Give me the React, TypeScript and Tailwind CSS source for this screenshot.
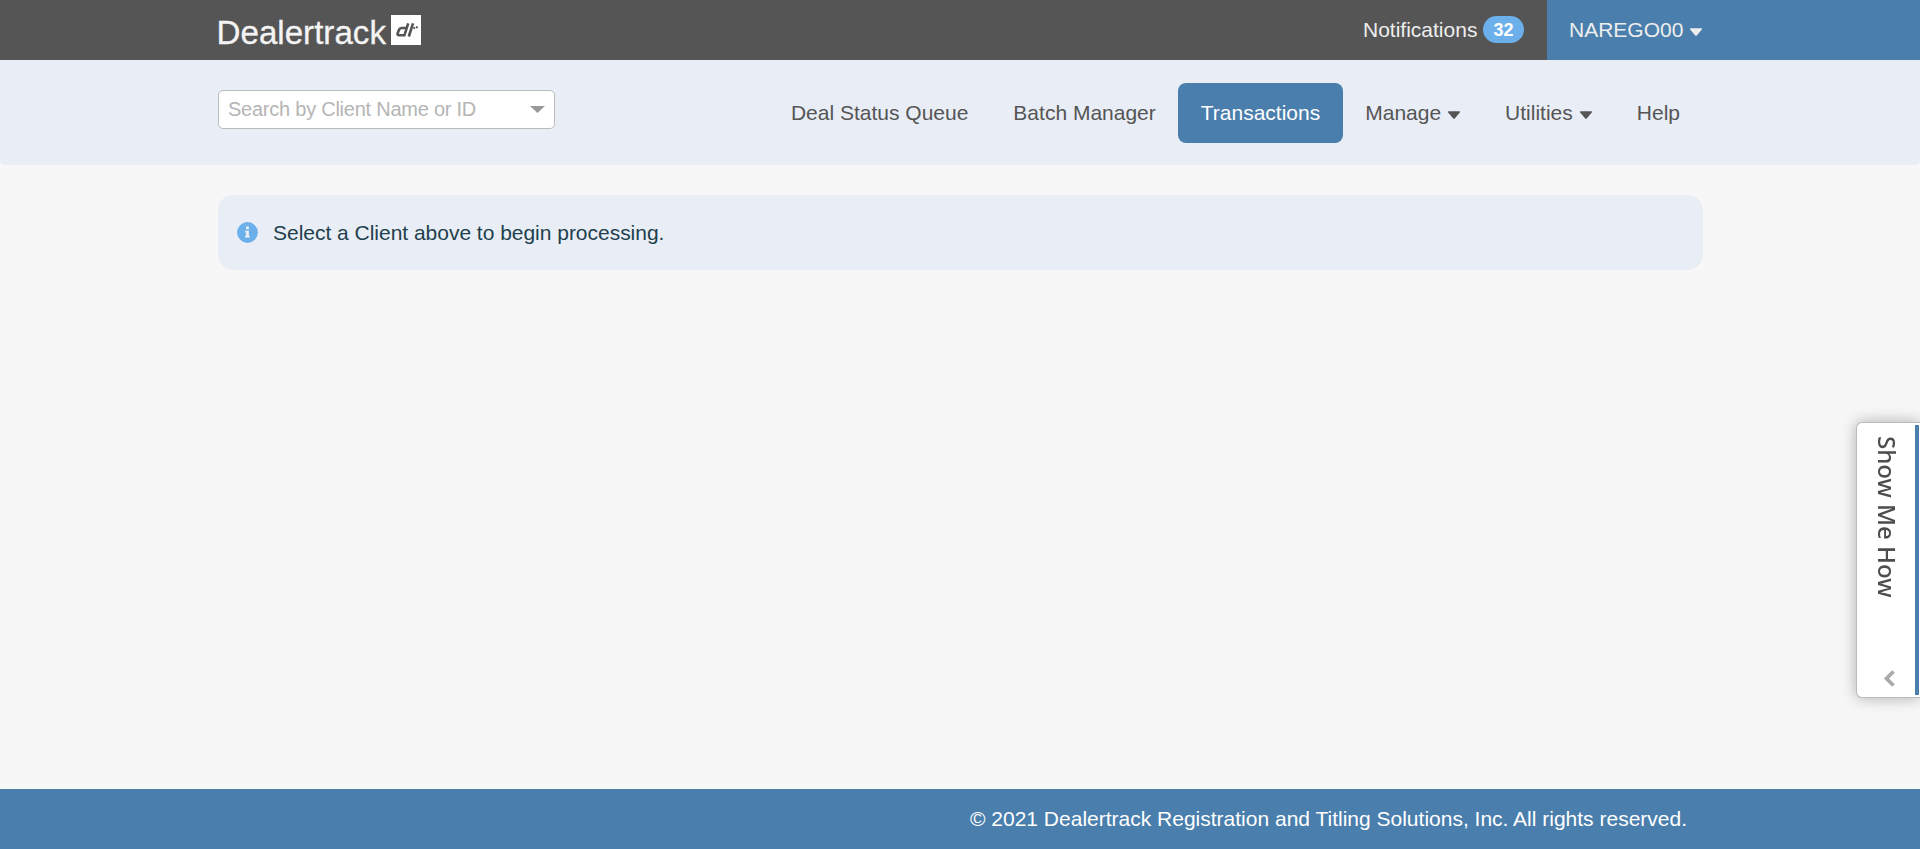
import React from "react";

function Caret({ className = "" }: { className?: string }) {
  return (
    <svg viewBox="0 0 12 8" className={`h-2 w-3 shrink-0 ${className}`} fill="currentColor" aria-hidden="true">
      <path d="M0.7 0.200h10.600c.7 0 .9.8.5 1.300L7 7.200c-.6.700-1.400.700-2 0L.2 1.500C-.2 1 0 .2.700.2z" />
    </svg>
  );
}

function Logo() {
  return (
    <svg viewBox="0 0 204 32" className="mt-[14px] h-8 w-[204px] shrink-0 overflow-visible" aria-label="Dealertrack">
      <text
        x="-1.500"
        y="30.300"
        fontSize="33.500"
        textLength="169.500"
        lengthAdjust="spacingAndGlyphs"
        fill="#f4f4f4"
        stroke="#f4f4f4"
        strokeWidth="0.300"
        className="font-['Liberation_Sans',Arial,sans-serif]"
      >
        Dealertrack
      </text>
      <rect x="173" y="1" width="30" height="30" fill="#fff" />
      <g fill="none" stroke="#555" strokeWidth="2.600">
        <path d="M190.200 9.300l-3.800 12h-5.400q-2 0-1.300-2l1.300-3.600q.6-1.700 2.600-1.700h4.600" />
        <path d="M195 9.300l-4.200 13.200" />
        <path strokeWidth="2" d="M195.300 14h1.700M197.800 13.300h2" />
      </g>
    </svg>
  );
}

const navItems = [
  { label: "Deal Status Queue" },
  { label: "Batch Manager" },
  { label: "Transactions", active: true },
  { label: "Manage", menu: true },
  { label: "Utilities", menu: true },
  { label: "Help" },
];

export default function App() {
  return (
    <div className="flex h-[849px] w-full flex-col overflow-hidden bg-[#f7f7f7] font-['Liberation_Sans',Arial,sans-serif] text-[21px] leading-[30px] text-[#555]">
      <header className="flex h-[60px] shrink-0 bg-[#555] text-[#eee]">
        <div className="flex flex-1 pl-[218px]">
          <Logo />
        </div>
        <div className="flex items-center pr-[23px]">
          <span className="w-[120px]">Notifications</span>
          <span className="mb-px flex h-[27px] w-[41px] items-center justify-center rounded-full bg-[#6cb0eb] text-[18px] font-bold text-white">
            32
          </span>
        </div>
        <div className="flex w-[373px] items-center bg-[#4a7eac] pl-[22px]">
          <span className="w-[121px] whitespace-nowrap">NAREGO00</span>
          <Caret className="mt-[3px]" />
        </div>
      </header>

      <div className="flex h-[105px] shrink-0 justify-between rounded-b-[5px] bg-[#e9eef6] px-[217.5px]">
        <div className="mt-[30px] flex h-[39px] w-[337px] items-center justify-between rounded-[5px] border border-[#bbb] bg-white pr-[9px] pl-[9.5px] text-[20px] tracking-[-0.24px] text-[#b5b5b5]">
          <span className="pb-px">Search by Client Name or ID</span>
          <svg viewBox="0 0 15 7" className="mb-px h-[7px] w-[15px]" fill="#999" aria-hidden="true">
            <path d="M0 0h15L7.500 7z" />
          </svg>
        </div>
        <nav className="mt-[23px] flex h-[60px]">
          {navItems.map((item) => (
            <div
              key={item.label}
              className={`flex items-center rounded-[8px] px-[22.5px] ${item.active ? "bg-[#4a7eac] text-white" : ""}`}
            >
              {item.label}
              {item.menu && <Caret className="mt-[3px] ml-[7px]" />}
            </div>
          ))}
        </nav>
      </div>

      <main className="flex-1 px-[217.5px] pt-[30px]">
        <div className="flex h-[75px] items-center rounded-[15px] bg-[#e9eef6] pl-[19.5px] text-[#213f4c]">
          <svg viewBox="0 0 21 21" className="mb-px h-[21px] w-[21px]" aria-hidden="true">
            <circle cx="10.500" cy="10.500" r="10.400" fill="#6cb0eb" />
            <path fill="#e9eef6" d="M9 4.500h2.900v2.700H9zM8.200 8.700h3.700v5h.9v1.900H8v-1.900h.9v-3.100h-.7z" />
          </svg>
          <span className="ml-[15px] tracking-[-0.02px]">Select a Client above to begin processing.</span>
        </div>
      </main>

      <footer className="flex h-[60px] shrink-0 items-center justify-end bg-[#4a7eac] pr-[233px] text-white">
        © 2021 Dealertrack Registration and Titling Solutions, Inc. All rights reserved.
      </footer>

      <aside className="fixed top-[422px] right-0 flex h-[276px] w-[64px] rounded-l-[6px] border border-r-0 border-[#bbb] bg-white shadow-[0_0_15px_rgba(0,0,0,0.3)]">
        <div className="flex flex-1 flex-col items-center justify-between pt-[13px] pb-[10px]">
          <span className="ml-[2px] font-['Noto_Sans','Open_Sans',sans-serif] text-[24px] leading-[30px] font-medium whitespace-nowrap text-[#4d4d4d] [writing-mode:vertical-rl]">
            Show Me How
          </span>
          <svg viewBox="0 0 12 17" className="ml-[6px] h-[17px] w-3" fill="none" stroke="#aaa" strokeWidth="3.800" aria-hidden="true">
            <path d="M10.500 1.500l-7 7 7 7" />
          </svg>
        </div>
        <div className="my-[2px] mr-px w-1 bg-[#4a7eac]" />
      </aside>
    </div>
  );
}
